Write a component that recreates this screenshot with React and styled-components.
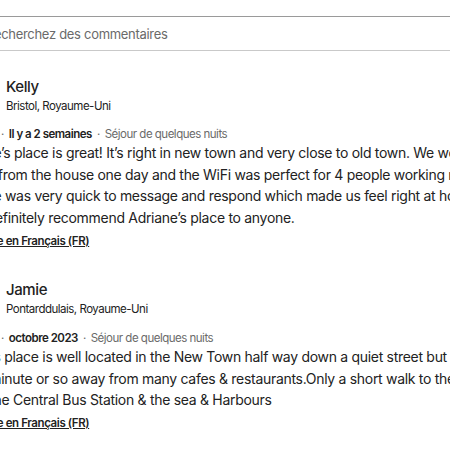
import React from "react";
import styled, { createGlobalStyle } from "styled-components";

const GlobalStyle = createGlobalStyle`
  html, body {
    margin: 0;
    padding: 0;
    width: 450px;
    height: 450px;
    overflow: hidden;
    background: #ffffff;
  }
  body {
    font-family: Inter, "Liberation Sans", Arial, sans-serif;
    color: #222222;
  }
`;

const Viewport = styled.div`
  width: 450px;
  height: 450px;
  overflow: hidden;
`;

const Panel = styled.div`
  margin-left: -48px;
  width: 620px;
  display: flex;
  flex-direction: column;
`;

const SearchBar = styled.div`
  margin-top: 16px;
  height: 33px;
  border-top: 1px solid #9a9a9a;
  border-bottom: 1px solid #c9c9c9;
  display: flex;
  align-items: center;
  gap: 10px;
  padding-left: 8px;
`;

const SearchIcon = styled.svg`
  width: 16px;
  height: 16px;
  flex: none;
`;

const SearchText = styled.span`
  font-size: 13px;
  letter-spacing: -0.3px;
  color: #6a6a6a;
  white-space: nowrap;
`;

const ReviewList = styled.div`
  display: flex;
  flex-direction: column;
  gap: 28px;
  margin-top: 23px;
`;

const Review = styled.article`
  display: flex;
  flex-direction: column;
`;

const Header = styled.div`
  display: flex;
  align-items: center;
  gap: 11px;
`;

const Avatar = styled.div`
  width: 43px;
  height: 43px;
  border-radius: 50%;
  background: ${(p) => p.$bg};
  flex: none;
`;

const Identity = styled.div`
  display: flex;
  flex-direction: column;
`;

const Name = styled.div`
  font-size: 15px;
  letter-spacing: -0.4px;
  font-weight: 500;
  line-height: 20px;
`;

const Location = styled.div`
  font-size: 11.5px;
  letter-spacing: -0.5px;
  line-height: 18px;
`;

const Meta = styled.div`
  margin-top: 9px;
  display: flex;
  align-items: center;
  font-size: 11.5px;
  letter-spacing: -0.5px;
  line-height: 17px;
  white-space: nowrap;
`;

const Stars = styled.span`
  display: inline-flex;
  gap: 1px;
`;

const Dot = styled.span`
  color: #6a6a6a;
  margin: 0 5px;
`;

const When = styled.span`
  font-weight: 600;
`;

const Stay = styled.span`
  color: #6a6a6a;
`;

const Body = styled.p`
  margin: -1px 0 0;
  font-size: 14px;
  letter-spacing: -0.3px;
  line-height: 21.7px;
  white-space: nowrap;
`;

const Translate = styled.a`
  margin-top: 3px;
  padding-left: 8px;
  font-size: 11.5px;
  letter-spacing: -0.4px;
  line-height: 18px;
  font-weight: 600;
  color: #222222;
  text-decoration: underline;
  align-self: flex-start;
  white-space: nowrap;
`;

const Star = () => (
  <svg width="8" height="8" viewBox="0 0 32 32" fill="#222">
    <path d="M16 1.5l4.5 9.2 10.1 1.5-7.3 7.1 1.7 10.1-9-4.8-9 4.8 1.7-10.1-7.3-7.1 10.1-1.5z" />
  </svg>
);

const reviews = [
  {
    name: "Kelly",
    location: "Bristol, Royaume-Uni",
    when: "Il y a 2 semaines",
    avatar: "#c8b59a",
    lines: [
      "Adriane’s place is great! It’s right in new town and very close to old town. We worked",
      "mostly from the house one day and the WiFi was perfect for 4 people working remotely.",
      "Adriane was very quick to message and respond which made us feel right at home.",
      "We’d definitely recommend Adriane’s place to anyone.",
    ],
  },
  {
    name: "Jamie",
    location: "Pontarddulais, Royaume-Uni",
    when: "octobre 2023",
    avatar: "#9aa7b5",
    lines: [
      "Adrians place is well located in the New Town half way down a quiet street but",
      "just a minute or so away from many cafes & restaurants.Only a short walk to the old town",
      "away the Central Bus Station & the sea & Harbours",
    ],
  },
];

export default function App() {
  return (
    <Viewport>
      <GlobalStyle />
      <Panel>
        <SearchBar>
          <SearchIcon viewBox="0 0 32 32" fill="none" stroke="#222" strokeWidth="3">
            <circle cx="13" cy="13" r="10" />
            <path d="M20.5 20.5L29 29" />
          </SearchIcon>
          <SearchText>Recherchez des commentaires</SearchText>
        </SearchBar>
        <ReviewList>
          {reviews.map((r) => (
            <Review key={r.name}>
              <Header>
                <Avatar $bg={r.avatar} />
                <Identity>
                  <Name>{r.name}</Name>
                  <Location>{r.location}</Location>
                </Identity>
              </Header>
              <Meta>
                <Stars>
                  <Star />
                  <Star />
                  <Star />
                  <Star />
                  <Star />
                </Stars>
                <Dot>·</Dot>
                <When>{r.when}</When>
                <Dot>·</Dot>
                <Stay>Séjour de quelques nuits</Stay>
              </Meta>
              <Body>
                {r.lines.map((l, i) => (
                  <React.Fragment key={i}>
                    {l}
                    {i < r.lines.length - 1 && <br />}
                  </React.Fragment>
                ))}
              </Body>
              <Translate href="#">Traduire en Français (FR)</Translate>
            </Review>
          ))}
        </ReviewList>
      </Panel>
    </Viewport>
  );
}
